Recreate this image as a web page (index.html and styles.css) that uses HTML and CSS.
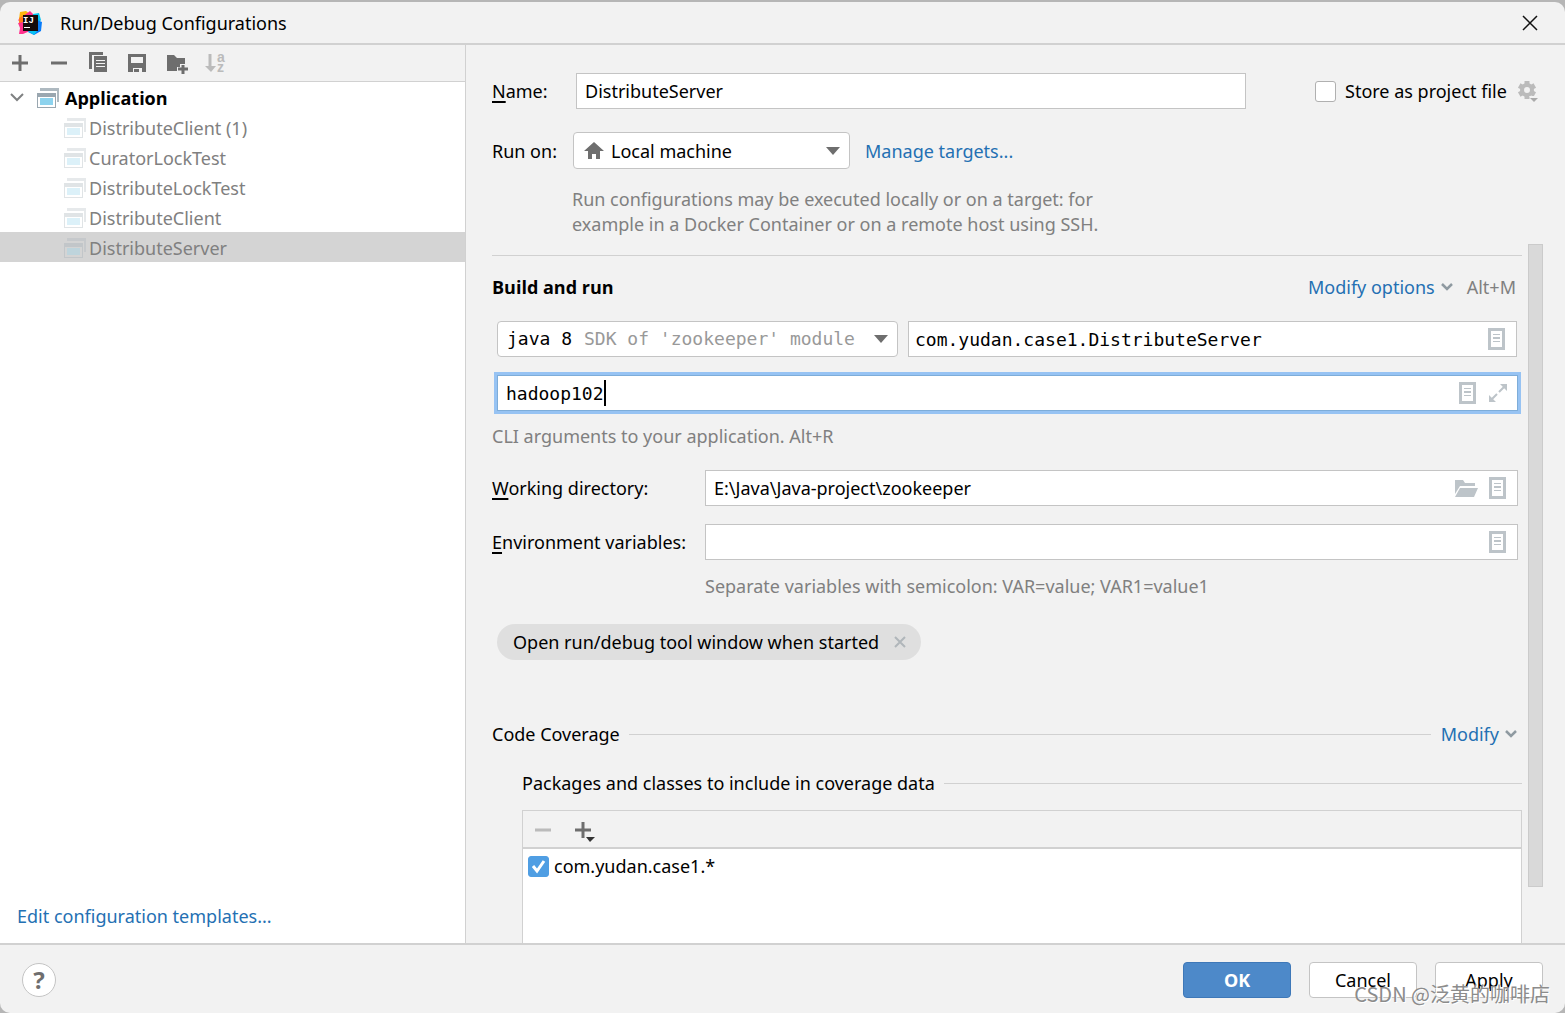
FILE: index.html
```html
<!DOCTYPE html>
<html lang="en">
<head>
<meta charset="utf-8">
<title>Run/Debug Configurations</title>
<link rel="stylesheet" href="styles.css">
</head>
<body>
<svg class="sprite" aria-hidden="true">
  <symbol id="app" viewBox="0 0 22 20">
    <path fill="#9aa7b0" opacity=".8" d="M3 0h19v14h-2V3H3z"/>
    <path fill="#9aa7b0" fill-rule="evenodd" d="M0 5h19v15H0zM1 9v10h17V9z"/>
    <path fill="#8dd3ee" d="M3 10h13v7H3z"/>
  </symbol>
  <symbol id="doc" viewBox="0 0 18 22">
    <path fill="#bdc4c9" fill-rule="evenodd" d="M0 0h17v22H0zM3 3v16h11V3z"/>
    <path fill="#bdc4c9" d="M5 6h7v1H5zM5 9h7v2H5zM5 13h7v1H5z"/>
  </symbol>
  <symbol id="chevron" viewBox="0 0 12 8">
    <path d="M1 1l5 5 5-5" fill="none" stroke="#8f9aa1" stroke-width="2.5"/>
  </symbol>
  <symbol id="arrow" viewBox="0 0 14 8">
    <path d="M0 0h14L7 8z" fill="#6e6e6e"/>
  </symbol>
</svg>

<main class="dialog">
  <header class="titlebar">
    <svg class="logo" viewBox="0 0 24 24">
      <path fill="#fdb60d" d="M2 1l6-1 5 4-6 7-6-3z"/>
      <path fill="#ff318c" d="M8 3l4-3 4 4v7H2L0 9z"/>
      <path fill="#ff7a1a" d="M1 7l5-3v9l-5 1z"/>
      <path fill="#ff318c" d="M0 12l6-1 6 9-7 3-4 0 1-6z"/>
      <path fill="#07c3f2" d="M15 3l6-1 2 7-4 6-4-2z"/>
      <path fill="#087cfa" d="M19 9l5 2-1 9-7 4-6-3 5-6z"/>
      <path fill="#07c3f2" d="M10 20l10-1-4 5z"/>
      <path fill="#140a0c" d="M5 4h15v16H5z"/>
      <text x="5" y="12" font-size="9" font-family="Liberation Mono, monospace" font-weight="bold" fill="#fff">IJ</text>
      <path fill="#fff" d="M6 16h6v1H6z"/>
    </svg>
    <h1>Run/Debug Configurations</h1>
    <button class="close" aria-label="Close"><svg viewBox="0 0 16 16"><path d="M1 1l14 14M15 1L1 15" stroke="#111" stroke-width="1.5" fill="none"/></svg></button>
  </header>

  <div class="body">
    <aside class="sidebar">
      <div class="toolbar">
        <button aria-label="Add"><svg viewBox="0 0 24 24"><path d="M12 4v16M4 12h16" stroke="#6e6e6e" stroke-width="3"/></svg></button>
        <button aria-label="Remove"><svg viewBox="0 0 24 24"><path d="M4 12h16" stroke="#6e6e6e" stroke-width="3"/></svg></button>
        <button aria-label="Copy"><svg viewBox="0 0 24 24"><path fill="#6e6e6e" d="M3 1h14v3H6v14H3zM8 5h13v16H8z"/><path d="M10 9.500h9M10 12.500h9M10 15.500h9" stroke="#f2f2f2" stroke-width="1"/></svg></button>
        <button aria-label="Save"><svg viewBox="0 0 24 24"><path fill="#6e6e6e" fill-rule="evenodd" d="M3 3h18v18h-4v-4H8v4H3zM6 6v6h12V6zM9 18h5v3H9z"/></svg></button>
        <button aria-label="New folder"><svg viewBox="0 0 24 24"><path fill="#6e6e6e" d="M3 4h7l3 3h8v6h-5v3h-3v4H3z"/><path d="M19 14v9M14 18h10" stroke="#6e6e6e" stroke-width="3"/></svg></button>
        <button aria-label="Sort"><svg viewBox="0 0 24 24"><path d="M7 3v14" stroke="#bbb" stroke-width="3"/><path fill="#bbb" d="M2 15h11l-5 6z"/><text x="14" y="11" class="az">a</text><text x="14" y="21" class="az">z</text></svg></button>
      </div>
      <ul class="tree">
        <li class="group"><svg class="twisty" viewBox="0 0 14 9"><path d="M1 1l6 6 6-6" fill="none" stroke="#7f8182" stroke-width="2"/></svg><svg class="app"><use href="#app"/></svg><span>Application</span></li>
        <li><svg class="app"><use href="#app"/></svg><span>DistributeClient (1)</span></li>
        <li><svg class="app"><use href="#app"/></svg><span>CuratorLockTest</span></li>
        <li><svg class="app"><use href="#app"/></svg><span>DistributeLockTest</span></li>
        <li><svg class="app"><use href="#app"/></svg><span>DistributeClient</span></li>
        <li class="selected"><svg class="app"><use href="#app"/></svg><span>DistributeServer</span></li>
      </ul>
      <a class="templates" href="#">Edit configuration templates...</a>
    </aside>

    <section class="pane">
      <div class="head">
        <div class="name-row">
          <label for="name"><u>N</u>ame:</label>
          <input class="field" id="name" type="text" value="DistributeServer">
          <div class="store">
            <input type="checkbox" id="store"><label for="store">Store as project file</label>
            <svg class="gear" viewBox="0 0 22 22"><g stroke="#bbb" stroke-width="5"><path d="M10 1v18"/><path d="M10 1v18" transform="rotate(60 10 10)"/><path d="M10 1v18" transform="rotate(120 10 10)"/></g><circle cx="10" cy="10" r="5" fill="#f2f2f2" stroke="#bbb" stroke-width="4"/><path d="M12 16h10l-5 6z" fill="#f2f2f2"/><path d="M13 18h8l-4 4z" fill="#aaa"/></svg>
          </div>
        </div>
        <div class="run-row">
          <label for="target">Run on:</label>
          <div class="combo target">
            <select id="target"><option>Local machine</option></select>
            <svg class="home" viewBox="0 0 20 18"><path fill="#6e6e6e" d="M10 0l10 9h-4v8h-4v-5H8v5H4V9H0z"/></svg>
            <svg class="arrow"><use href="#arrow"/></svg>
          </div>
          <a href="#">Manage targets...</a>
        </div>
        <p class="hint run-hint">Run configurations may be executed locally or on a target: for<br>example in a Docker Container or on a remote host using SSH.</p>
      </div>

      <div class="scroll">
        <div class="content">
          <div class="build-head">
            <h2>Build and run</h2>
            <a href="#">Modify options <svg class="chev"><use href="#chevron"/></svg></a>
            <span class="hint">Alt+M</span>
          </div>
          <div class="class-row">
            <div class="combo jre">
              <select aria-label="Java runtime"><option>java 8</option></select>
              <span class="jre-hint">SDK of 'zookeeper' module</span>
              <svg class="arrow"><use href="#arrow"/></svg>
            </div>
            <div class="box">
              <input class="mono" type="text" aria-label="Main class" value="com.yudan.case1.DistributeServer">
              <svg class="doc"><use href="#doc"/></svg>
            </div>
          </div>
          <div class="box focused">
            <input class="mono" type="text" aria-label="Program arguments" value="hadoop102">
            <span class="caret"></span>
            <svg class="doc"><use href="#doc"/></svg>
            <svg class="expand" viewBox="0 0 18 18"><path fill="#bdc4c9" d="M11 0h7v7zM0 11v7h7z"/><path d="M10 8l5-5M8 10l-5 5" stroke="#bdc4c9" stroke-width="2"/></svg>
          </div>
          <p class="hint cli">CLI arguments to your application. Alt+R</p>
          <div class="env">
            <label for="wd"><u>W</u>orking directory:</label>
            <div class="box">
              <input id="wd" type="text" value="E:\Java\Java-project\zookeeper">
              <svg class="folder" viewBox="0 0 23 17"><path fill="#bdc4c9" d="M0 0h8l2 3h10v3H5L0 14zM5 8h18l-4 9H0z"/></svg>
              <svg class="doc"><use href="#doc"/></svg>
            </div>
            <label for="ev"><u>E</u>nvironment variables:</label>
            <div class="box">
              <input id="ev" type="text" value="">
              <svg class="doc"><use href="#doc"/></svg>
            </div>
            <p class="hint">Separate variables with semicolon: VAR=value; VAR1=value1</p>
          </div>
          <div class="chip">Open run/debug tool window when started
            <button aria-label="Remove option"><svg viewBox="0 0 12 12"><path d="M1 1l10 10M11 1L1 11" stroke="#b0b6ba" stroke-width="2"/></svg></button>
          </div>
          <div class="section">
            <h3>Code Coverage</h3><span class="rule"></span>
            <a href="#">Modify <svg class="chev"><use href="#chevron"/></svg></a>
          </div>
          <div class="coverage">
            <div class="section"><h3>Packages and classes to include in coverage data</h3><span class="rule"></span></div>
            <div class="list">
              <div class="list-tools">
                <button aria-label="Remove pattern"><svg viewBox="0 0 24 24"><path d="M4 12h16" stroke="#bbb" stroke-width="3"/></svg></button>
                <button aria-label="Add pattern"><svg viewBox="0 0 24 24"><path d="M12 4v16M4 12h16" stroke="#6e6e6e" stroke-width="3"/><path d="M14 18h10l-5 5z" fill="#f2f2f2"/><path d="M15 19h9l-5 5z" fill="#333"/></svg></button>
              </div>
              <div class="item"><input type="checkbox" id="pkg" checked><label for="pkg">com.yudan.case1.*</label></div>
            </div>
          </div>
        </div>
        <div class="scrollbar"><div class="thumb"></div></div>
      </div>
    </section>
  </div>

  <footer class="footer">
    <button class="help" aria-label="Help">?</button>
    <button class="btn primary">OK</button>
    <button class="btn">Cancel</button>
    <button class="btn">Apply</button>
    <span class="watermark">CSDN @泛黄的咖啡店</span>
  </footer>
</main>
</body>
</html>
```
FILE: styles.css
```css
* { box-sizing: border-box; }

body {
  margin: 0;
  background: #b6b6b6;
  color: #000;
  font: 18px/24px "Noto Sans", "Noto Sans CJK SC", sans-serif;
}

h1, h2, h3, p, ul { margin: 0; padding: 0; font-size: inherit; font-weight: normal; }
ul { list-style: none; }
a { color: #2470b3; text-decoration: none; }
button, input, select { font: inherit; color: inherit; margin: 0; }
button { padding: 0; border: 0; background: none; }
svg { display: block; flex: none; overflow: visible; }
u { text-underline-offset: 3px; text-decoration-thickness: 2px; text-decoration-skip-ink: none; }
.sprite { position: absolute; width: 0; height: 0; }
.hint { color: #808080; }
.mono { font-family: "DejaVu Sans Mono", monospace; font-size: 18px; }

.dialog {
  display: flex;
  flex-direction: column;
  min-height: calc(100vh - 2px);
  margin-top: 2px;
  border-radius: 10px;
  background: #f2f2f2;
  overflow: hidden;
}

.titlebar {
  display: flex;
  align-items: center;
  height: 43px;
  padding: 0 27px 0 18px;
  border-bottom: 2px solid #d1d1d1;
}
.logo { width: 24px; height: 24px; margin-right: 18px; }
.close { margin-left: auto; }
.close svg { width: 16px; height: 16px; }

.body { display: flex; flex: 1; }

.sidebar {
  display: flex;
  flex-direction: column;
  flex: 0 0 466px;
  border-right: 1px solid #d1d1d1;
  background: #fff;
}
.toolbar {
  display: flex;
  align-items: center;
  gap: 15px;
  height: 37px;
  padding-left: 8px;
  border-bottom: 1px solid #d1d1d1;
  background: #f2f2f2;
}
.toolbar svg, .list-tools svg { width: 24px; height: 24px; }
.az { font: bold 14px "Liberation Sans", sans-serif; fill: #bbb; }

.tree li {
  display: flex;
  align-items: center;
  height: 30px;
  padding: 1px 0 0 64px;
  color: #808080;
}
.tree .group { padding-left: 10px; color: #000; font-family: "Open Sans", sans-serif; font-weight: bold; }
.tree .selected { background: #d4d4d4; }
.twisty { width: 14px; height: 9px; margin-right: 13px; }
.app { width: 22px; height: 20px; margin-right: 3px; opacity: .3; }
.group .app { margin-right: 6px; opacity: 1; }
.templates { margin-top: auto; padding: 0 17px 15px; }

.pane { display: flex; flex-direction: column; flex: 1; min-width: 0; }
.head { padding: 28px 26px 0 26px; }
.name-row { display: flex; align-items: center; }
.name-row > label { width: 84px; }
.name-row .field { flex: 1; min-width: 0; margin-right: 69px; }
.field, .box { height: 36px; border: 1px solid #c4c4c4; background: #fff; }
.field { padding: 0 8px; }
.store { display: flex; align-items: center; }
.store label { min-width: 165px; margin: 0 7px 0 9px; }
.gear { width: 22px; height: 22px; }

input[type="checkbox"] {
  appearance: none;
  width: 21px;
  height: 21px;
  border: 1px solid #b0b0b0;
  border-radius: 3px;
  background: #fff;
}
input[type="checkbox"]:checked {
  border-color: #4f9ee3;
  background: #4f9ee3 url("data:image/svg+xml,%3Csvg xmlns='http://www.w3.org/2000/svg' viewBox='0 0 19 19'%3E%3Cpath d='M4 9l4 5 7-10' fill='none' stroke='white' stroke-width='3'/%3E%3C/svg%3E");
}

.run-row { display: flex; align-items: center; margin-top: 23px; }
.run-row > label { width: 81px; }
.combo { display: grid; align-items: center; }
.combo > * { grid-area: 1 / 1; }
.combo select {
  appearance: none;
  width: 100%;
  height: 37px;
  padding: 0 9px;
  border: 1px solid #c4c4c4;
  border-radius: 4px;
  background: #fff;
}
.combo svg, .combo span { pointer-events: none; }
.arrow { width: 14px; height: 8px; margin-right: 10px; justify-self: end; }
.target { width: 277px; margin-right: 15px; }
.target select { padding-left: 37px; }
.home { width: 20px; height: 18px; margin-left: 11px; }
.run-hint { margin: 18px 0 0 80px; line-height: 25px; }

.scroll { display: flex; flex: 1; margin-top: 7px; padding: 0 22px 0 26px; }
.content { display: flex; flex-direction: column; flex: 1; min-width: 0; margin-top: 11px; border-top: 1px solid #d1d1d1; }
.scrollbar { width: 15px; margin-left: 6px; }
.thumb { height: 92%; border: 1px solid #cbcbcb; background: #d9d9d9; }

.build-head { display: flex; align-items: center; margin-top: 19px; padding-right: 6px; }
.build-head h2 { margin-right: auto; font-family: "Open Sans", sans-serif; font-weight: bold; }
.build-head .hint { margin-left: 14px; }
.build-head a, .section a { display: flex; align-items: center; gap: 6px; }
.chev { width: 12px; height: 8px; }

.class-row { display: flex; gap: 10px; margin: 22px 5px 0 5px; }
.jre { flex: 0 0 401px; font-family: "DejaVu Sans Mono", monospace; font-size: 18px; }
.jre select { height: 36px; }
.jre-hint { margin-left: 87px; color: #999; }

.box { display: flex; align-items: center; flex: 1; min-width: 0; padding-right: 10px; }
.box input {
  flex: 1;
  min-width: 0;
  height: 34px;
  padding: 0 8px;
  border: 0;
  outline: 0;
  background: none;
}
.class-row input { padding: 0 6px; }
.doc { width: 18px; height: 22px; }
.folder { width: 23px; height: 17px; margin-right: 11px; }
.expand { width: 18px; height: 18px; margin-left: 12px; }

.focused {
  position: relative;
  flex: none;
  height: 36px;
  margin: 18px 4px 0 5px;
  border-color: #7eadd9;
  box-shadow: 0 0 0 3px #97c3f3;
}
.caret {
  position: absolute;
  left: calc(8px + 9ch);
  width: 2px;
  height: 26px;
  background: #000;
  font-family: "DejaVu Sans Mono", monospace;
  font-size: 18px;
}
.cli { margin-top: 13px; }

.env {
  display: grid;
  grid-template-columns: 213px 1fr;
  align-items: center;
  row-gap: 18px;
  margin: 22px 4px 0 0;
}
.env .hint { grid-column: 2; margin-top: -4px; }

.chip {
  display: flex;
  align-items: center;
  align-self: flex-start;
  gap: 15px;
  height: 36px;
  margin: 26px 0 0 5px;
  padding: 0 15px 0 16px;
  border-radius: 18px;
  background: #dfdfdf;
}
.chip svg { width: 12px; height: 12px; }

.section { display: flex; align-items: center; }
.content > .section { margin-top: 62px; padding-right: 5px; }
.rule { flex: 1; height: 1px; margin-left: 9px; background: #d1d1d1; }
.section a { margin-left: 10px; }

.coverage { display: flex; flex-direction: column; flex: 1; margin: 25px 0 0 30px; }
.list {
  flex: 1;
  min-height: 131px;
  margin-top: 15px;
  border: 1px solid #d1d1d1;
  border-bottom: 0;
  background: #fff;
}
.list-tools {
  display: flex;
  align-items: center;
  gap: 16px;
  height: 38px;
  padding: 2px 0 0 8px;
  border-bottom: 2px solid #d1d1d1;
  background: #f2f2f2;
}
.item { display: flex; align-items: center; gap: 5px; height: 34px; padding-left: 5px; }

.footer {
  position: relative;
  display: flex;
  align-items: center;
  gap: 18px;
  height: 70px;
  padding: 2px 22px 0;
  border-top: 2px solid #d1d1d1;
}
.help {
  width: 34px;
  height: 34px;
  margin-right: auto;
  border: 1px solid #c4c4c4;
  border-radius: 50%;
  background: #fff;
  color: #6e6e6e;
  font-size: 24px;
  font-weight: bold;
}
.btn {
  width: 108px;
  height: 36px;
  border: 1px solid #c4c4c4;
  border-radius: 4px;
  background: #fff;
}
.primary { border-color: #3e78b8; background: #4d89c9; color: #fff; font-weight: bold; }
.watermark {
  position: absolute;
  right: 15px;
  bottom: 7px;
  color: #8c8c8c;
  font-family: "Noto Sans CJK SC", sans-serif;
  font-size: 20px;
  text-shadow: 1px 1px 0 #fff;
}
```
